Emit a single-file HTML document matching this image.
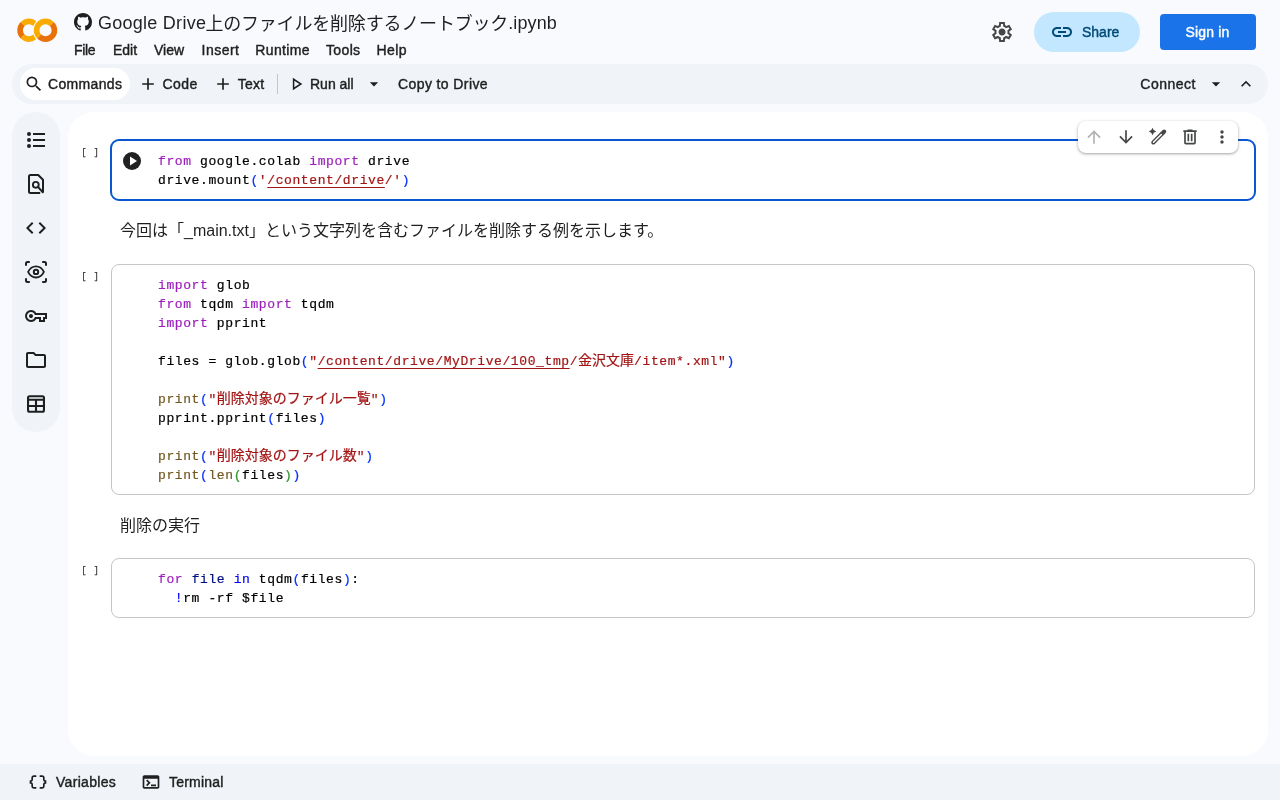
<!DOCTYPE html>
<html lang="ja">
<head>
<meta charset="utf-8">
<title>Google Drive上のファイルを削除するノートブック.ipynb - Colab</title>
<style>
*{box-sizing:border-box;margin:0;padding:0}
html,body{width:1280px;height:800px;overflow:hidden}
body{background:#f8fafd;font-family:"Liberation Sans","Noto Sans CJK JP",sans-serif;color:#1f1f1f;position:relative}
#app{position:absolute;left:0;top:0;width:1280px;height:800px;background:#f8fafd;will-change:transform}
.abs{position:absolute}
svg{display:block;position:absolute;overflow:visible}
.m{-webkit-text-stroke:.42px currentColor}
/* header */
#title{left:98px;top:9.5px;font-size:18px;line-height:26px;white-space:nowrap;color:#1f1f1f}
#menu{left:0;top:40px;font-size:14px;line-height:20px;white-space:nowrap}
#menu span{position:absolute;top:0}
#share{left:1034px;top:12px;width:106px;height:40px;border-radius:20px;background:#c2e7ff;color:#004a77;font-size:14px}
#share span{position:absolute;left:48px;top:10px;line-height:20px}
#signin{left:1160px;top:14px;width:96px;height:36px;border-radius:4px;background:#1a73e8;color:#fff;font-size:14px;line-height:36px}
#signin span{position:absolute;left:25.5px;top:0;letter-spacing:.15px}
/* toolbar */
#tb{left:12px;top:64px;width:1256px;height:40px;border-radius:20px;background:#f0f4f9}
#cmd{left:8px;top:4px;width:110px;height:32px;border-radius:16px;background:#fff}
.tbt{position:absolute;top:10px;font-size:14px;line-height:20px;white-space:nowrap;color:#1f1f1f}
#div1{left:265px;top:10px;width:1px;height:20px;background:#c4c7c5}
/* sidebar */
#side{left:12px;top:112px;width:48px;height:320px;border-radius:24px;background:#f0f4f9}
#side svg{left:12px}
/* notebook */
#nb{left:68px;top:112px;width:1200px;height:644px;border-radius:26px;background:#fff}
.cell{position:absolute;left:43px;width:1144px;border:1px solid #c4c7c5;border-radius:8px;background:#fff}
.cell.focus{left:42px;width:1146px;border:2px solid #0b57d0;border-radius:9px}
.code{position:absolute;left:46px;top:11px;font-family:"Liberation Mono","Noto Sans CJK JP",monospace;font-size:13px;letter-spacing:.6px;line-height:19px;white-space:pre;color:#000;-webkit-text-stroke:.2px}
.j{font-size:14px;letter-spacing:0}
.br{position:absolute;left:13.500px;font-family:"Liberation Mono",monospace;font-size:8.2px;line-height:12px;word-spacing:2.300px;color:#333;-webkit-text-stroke:.25px #333;white-space:pre}
.txt{position:absolute;left:52px;font-size:16px;line-height:24px;color:#1f1f1f;white-space:nowrap}
.k{color:#9d1fbd}.s{color:#a31515}.f{color:#735822}.b1{color:#0431fa}.b2{color:#319331}.v{color:#001080}.kb{color:#0000ff}
.u{text-decoration:underline;text-decoration-thickness:1px;text-underline-offset:3px}
#ctb{left:1010px;top:8.5px;width:160px;height:32px;border-radius:8px;background:#fff;box-shadow:0 1px 2px rgba(60,64,67,.3),0 1px 3px 1px rgba(60,64,67,.15)}
#ctb svg{top:6px}
/* footer */
#ft{left:0;top:764px;width:1280px;height:36px;background:#f0f4f9}
#ft span{position:absolute;top:8px;font-size:14px;line-height:20px}
</style>
</head>
<body>
<div id="app">
<!-- HEADER -->
<svg class="abs" style="left:16.6px;top:9.65px" width="40.5" height="40.5" viewBox="0 0 24 24">
<path d="M4.54,9.46,2.19,7.1a6.93,6.93,0,0,0,0,9.79l2.36-2.36A3.59,3.59,0,0,1,4.54,9.46Z" fill="#e8710a"/>
<path d="M2.19,7.1,4.54,9.46a3.59,3.59,0,0,1,5.08,0l1.71-2.93h0l-.1-.08h0A6.93,6.93,0,0,0,2.19,7.1Z" fill="#f9ab00"/>
<path d="M11.34,17.46h0L9.62,14.54a3.59,3.59,0,0,1-5.08,0L2.19,16.9a6.93,6.93,0,0,0,9,.65l.11-.09" fill="#f9ab00"/>
<path d="M12,7.1a6.93,6.93,0,0,0,0,9.79l2.36-2.36a3.59,3.59,0,1,1,5.08-5.08L21.81,7.1A6.93,6.93,0,0,0,12,7.1Z" fill="#f9ab00"/>
<path d="M21.81,7.1,19.46,9.46a3.59,3.59,0,0,1-5.08,5.08L12,16.9A6.93,6.93,0,0,0,21.81,7.1Z" fill="#e8710a"/>
</svg>
<svg class="abs" style="left:74px;top:13px" width="18" height="18" viewBox="0 0 16 16"><path fill="#1f1f1f" d="M8 0C3.58 0 0 3.58 0 8c0 3.54 2.29 6.53 5.47 7.59.4.07.55-.17.55-.38 0-.19-.01-.82-.01-1.49-2.01.37-2.53-.49-2.69-.94-.09-.23-.48-.94-.82-1.13-.28-.15-.68-.52-.01-.53.63-.01 1.08.58 1.23.82.72 1.21 1.87.87 2.33.66.07-.52.28-.87.51-1.07-1.78-.2-3.64-.89-3.64-3.95 0-.87.31-1.59.82-2.15-.08-.2-.36-1.020.08-2.120 0 0 .67-.21 2.200.82.64-.18 1.320-.27 2-.27s1.360.09 2 .27c1.530-1.040 2.200-.82 2.200-.82.44 1.100.16 1.920.08 2.120.51.56.82 1.270.82 2.150 0 3.070-1.870 3.750-3.650 3.950.29.25.54.73.54 1.480 0 1.070-.01 1.930-.01 2.200 0 .21.15.46.55.38A8.013 8.013 0 0 0 16 8c0-4.420-3.580-8-8-8z"/></svg>
<div id="title" class="abs"><span style="letter-spacing:.26px">Google Drive</span><span style="letter-spacing:-.19px;position:relative;top:1px;margin-left:-.8px">上のファイルを削除するノートブック</span><span style="letter-spacing:.12px">.ipynb</span></div>
<div id="menu" class="abs m"><span style="left:74px;letter-spacing:-.3px">File</span><span style="left:113px">Edit</span><span style="left:154px">View</span><span style="left:201.500px;letter-spacing:.5px">Insert</span><span style="left:255.300px;letter-spacing:.36px">Runtime</span><span style="left:326px;letter-spacing:.36px">Tools</span><span style="left:376.500px;letter-spacing:.4px">Help</span></div>
<svg class="abs" style="left:990px;top:20px" width="24" height="24" viewBox="0 -960 960 960"><path fill="#444746" d="m370-80-16-128q-13-5-24.500-12T307-235l-119 50L78-375l103-78q-1-7-1-13.500v-27q0-6.500 1-13.500L78-585l110-190 119 50q11-8 23-15t24-12l16-128h220l16 128q13 5 24.500 12t22.500 15l119-50 110 190-103 78q1 7 1 13.500v27q0 6.500-2 13.500l103 78-110 190-118-50q-11 8-23 15t-24 12L590-80H370Zm70-80h79l14-106q31-8 57.500-23.500T639-327l99 41 39-68-86-65q5-14 7-29.500t2-31.500q0-16-2-31.500t-7-29.500l86-65-39-68-99 42q-22-23-48.500-38.500T533-694l-13-106h-79l-14 106q-31 8-57.500 23.500T321-633l-99-41-39 68 86 64q-5 15-7 30t-2 32q0 16 2 31t7 30l-86 65 39 68 99-42q22 23 48.500 38.500T427-266l13 106Zm42-180q58 0 99-41t41-99q0-58-41-99t-99-41q-59 0-99.500 41T342-480q0 58 40.500 99t99.500 41Z"/></svg>
<div id="share" class="abs m"><svg style="left:16px;top:8px" width="24" height="24" viewBox="0 0 24 24"><path fill="#004a77" d="M3.9 12c0-1.710 1.390-3.100 3.100-3.100h4V7H7c-2.760 0-5 2.240-5 5s2.240 5 5 5h4v-1.900H7c-1.710 0-3.100-1.390-3.100-3.100zM8 13h8v-2H8v2zm9-6h-4v1.900h4c1.710 0 3.100 1.390 3.100 3.100s-1.390 3.100-3.100 3.100h-4V17h4c2.760 0 5-2.240 5-5s-2.240-5-5-5z"/></svg><span>Share</span></div>
<div id="signin" class="abs m"><span>Sign in</span></div>
<!-- TOOLBAR -->
<div id="tb" class="abs m">
  <div id="cmd" class="abs"></div>
  <svg style="left:12px;top:10px" width="20" height="20" viewBox="0 0 24 24"><path fill="#1f1f1f" d="M15.500 14h-.790l-.280-.270A6.471 6.471 0 0 0 16 9.500 6.500 6.500 0 1 0 9.500 16c1.610 0 3.090-.590 4.230-1.570l.270.280v.790l5 4.990L20.490 19l-4.990-5zm-6 0C7.010 14 5 11.990 5 9.500S7.010 5 9.500 5 14 7.010 14 9.500 11.990 14 9.500 14z"/></svg>
  <span class="tbt" style="left:36px;letter-spacing:.33px">Commands</span>
  <svg style="left:126px;top:10px" width="20" height="20" viewBox="0 0 24 24"><path fill="#1f1f1f" d="M19 13h-6v6h-2v-6H5v-2h6V5h2v6h6v2z"/></svg>
  <span class="tbt" style="left:150.500px;letter-spacing:.4px">Code</span>
  <svg style="left:201px;top:10px" width="20" height="20" viewBox="0 0 24 24"><path fill="#1f1f1f" d="M19 13h-6v6h-2v-6H5v-2h6V5h2v6h6v2z"/></svg>
  <span class="tbt" style="left:225.700px;letter-spacing:.3px">Text</span>
  <div id="div1" class="abs"></div>
  <svg style="left:275px;top:10px" width="20" height="20" viewBox="0 0 24 24"><path fill="none" stroke="#1f1f1f" stroke-width="1.8" stroke-linejoin="miter" d="M7.900 6.300v11.400L16.700 12z"/></svg>
  <span class="tbt" style="left:298px;letter-spacing:0">Run all</span>
  <svg style="left:352px;top:10px" width="20" height="20" viewBox="0 0 24 24"><path fill="#1f1f1f" d="M7 10l5 5 5-5z"/></svg>
  <span class="tbt" style="left:386px;letter-spacing:.4px">Copy to Drive</span>
  <span class="tbt" style="left:1128.300px;letter-spacing:.5px">Connect</span>
  <svg style="left:1194px;top:10px" width="20" height="20" viewBox="0 0 24 24"><path fill="#1f1f1f" d="M7 10l5 5 5-5z"/></svg>
  <svg style="left:1224px;top:10px" width="20" height="20" viewBox="0 0 24 24"><path fill="#1f1f1f" d="M7.410 15.410L12 10.830l4.590 4.580L18 14l-6-6-6 6z"/></svg>
</div>
<!-- SIDEBAR -->
<div id="side" class="abs">
  <svg style="top:16px" width="24" height="24" viewBox="0 0 24 24"><g fill="#1f1f1f"><circle cx="5" cy="6" r="2"/><circle cx="5" cy="12" r="2"/><circle cx="5" cy="18" r="2"/><path d="M9 5h12v2H9zM9 11h12v2H9zM9 17h12v2H9z"/></g></svg>
  <svg style="top:60px" width="24" height="24" viewBox="0 0 24 24"><g fill="none" stroke="#1f1f1f" stroke-width="2"><path d="M16.200 21H6.500A1.500 1.500 0 0 1 5 19.500v-15A1.500 1.500 0 0 1 6.500 3h7.700L19 7.800V20.500" stroke-linejoin="round"/><circle cx="11.800" cy="12.800" r="2.900" stroke-width="1.900"/><path d="M13.900 14.900l5.400 5.900"/></g></svg>
  <svg style="top:104px" width="24" height="24" viewBox="0 0 24 24"><path fill="#1f1f1f" d="M9.400 16.600L4.800 12l4.600-4.600L8 6l-6 6 6 6 1.400-1.400zm5.200 0l4.600-4.600-4.600-4.600L16 6l6 6-6 6-1.400-1.400z"/></svg>
  <svg style="top:148px" width="24" height="24" viewBox="0 0 24 24"><g fill="none" stroke="#1f1f1f" stroke-width="2"><path d="M2 5.800V3.500A1.500 1.500 0 0 1 3.500 2H5.800M18.200 2h2.300A1.500 1.500 0 0 1 22 3.500v2.300M22 18.200v2.300a1.500 1.500 0 0 1-1.500 1.500h-2.300M5.800 22H3.500A1.500 1.500 0 0 1 2 20.500v-2.300"/><path stroke-width="1.800" d="M4.100 11.900C5.800 8.300 8.700 6.300 12 6.300s6.200 2 7.900 5.600c-1.700 3.600-4.600 5.600-7.900 5.600s-6.200-2-7.900-5.600z"/><circle cx="12" cy="11.900" r="2.200"/></g></svg>
  <svg style="top:192px" width="24" height="24" viewBox="0 -960 960 960"><path fill="#1f1f1f" d="M280-240q-100 0-170-70T40-480q0-100 70-170t170-70q66 0 121 33t87 87h432v240h-80v120H600v-120H488q-32 54-87 87t-121 33Zm0-80q66 0 106-40.500t48-79.500h246v120h80v-120h80v-80H434q-8-39-48-79.500T280-640q-66 0-113 47t-47 113q0 66 47 113t113 47Zm0-80q33 0 56.500-23.500T360-480q0-33-23.500-56.500T280-560q-33 0-56.500 23.500T200-480q0 33 23.500 56.500T280-400Z"/></svg>
  <svg style="top:236px" width="24" height="24" viewBox="0 0 24 24"><path fill="#1f1f1f" d="M9.170 6l2 2H20v10H4V6h5.170M10 4H4c-1.100 0-1.990.9-1.990 2L2 18c0 1.100.9 2 2 2h16c1.100 0 2-.9 2-2V8c0-1.100-.9-2-2-2h-8l-2-2z"/></svg>
  <svg style="top:280px" width="24" height="24" viewBox="0 0 24 24"><g fill="none" stroke="#1f1f1f" stroke-width="2.100"><rect x="4.050" y="4.300" width="15.900" height="15.400" rx="1.500"/><path d="M4 7.800h16M4 14h16M12 8v12"/></g></svg>
</div>
<!-- NOTEBOOK -->
<div id="nb" class="abs">
  <div class="br" style="top:34.5px">[ ]</div>
  <div class="cell focus" style="top:27px;height:62px"><svg style="left:11px;top:11px" width="18" height="18" viewBox="0 0 18 18"><circle cx="9" cy="9" r="9" fill="#212121"/><path d="M7 4.500v9l7-4.500z" fill="#fff"/></svg><div class="code" style="top:11px"><span class="k">from</span> google.colab <span class="k">import</span> drive
drive.mount<span class="b1">(</span><span class="s">'<span class="u">/content/drive</span>/'</span><span class="b1">)</span></div></div>
  <div class="txt" style="top:107px">今回は「_main.txt」という文字列を含むファイルを削除する例を示します。</div>
  <div class="br" style="top:158.5px">[ ]</div>
  <div class="cell" style="top:152px;height:231px"><div class="code"><span class="k">import</span> glob
<span class="k">from</span> tqdm <span class="k">import</span> tqdm
<span class="k">import</span> pprint

files = glob.glob<span class="b1">(</span><span class="s">"<span class="u">/content/drive/MyDrive/100_tmp</span>/<span class="j">金沢文庫</span>/item*.xml"</span><span class="b1">)</span>

<span class="f">print</span><span class="b1">(</span><span class="s">"<span class="j">削除対象のファイル一覧</span>"</span><span class="b1">)</span>
pprint.pprint<span class="b1">(</span>files<span class="b1">)</span>

<span class="f">print</span><span class="b1">(</span><span class="s">"<span class="j">削除対象のファイル数</span>"</span><span class="b1">)</span>
<span class="f">print</span><span class="b1">(</span><span class="f">len</span><span class="b2">(</span>files<span class="b2">)</span><span class="b1">)</span></div></div>
  <div class="txt" style="top:402px">削除の実行</div>
  <div class="br" style="top:452.5px">[ ]</div>
  <div class="cell" style="top:446px;height:60px"><div class="code"><span class="k">for</span> <span class="v">file</span> <span class="kb">in</span> tqdm<span class="b1">(</span>files<span class="b1">)</span>:
  <span class="kb">!</span>rm -rf $file</div></div>
  <div id="ctb" class="abs">
    <svg style="left:6px" width="20" height="20" viewBox="0 0 24 24"><path fill="#b0b2b1" d="M4 12l1.410 1.410L11 7.830V20h2V7.830l5.580 5.590L20 12l-8-8-8 8z"/></svg>
    <svg style="left:38px" width="20" height="20" viewBox="0 0 24 24"><path fill="#444746" d="M20 12l-1.410-1.410L13 16.170V4h-2v12.170l-5.580-5.590L4 12l8 8 8-8z"/></svg>
    <svg style="left:70px" width="20" height="20" viewBox="0 0 20 20"><path d="M5.300 15.450L16.200 4.550" stroke="#444746" stroke-width="4.100" stroke-linecap="round" fill="none"/><path d="M5.500 15.250L13.300 7.450" stroke="#fff" stroke-width="1.500" stroke-linecap="round" fill="none"/><path fill="#444746" d="M4.500 .8Q5.200 3.800 8.200 4.500Q5.200 5.200 4.500 8.200Q3.800 5.200 .8 4.500Q3.800 3.800 4.500 .8z"/></svg>
    <svg style="left:102px" width="20" height="20" viewBox="0 -960 960 960"><path fill="#444746" d="M280-120q-33 0-56.500-23.500T200-200v-520h-40v-80h200v-40h240v40h200v80h-40v520q0 33-23.500 56.500T680-120H280Zm400-600H280v520h400v-520ZM360-280h80v-360h-80v360Zm160 0h80v-360h-80v360ZM280-720v520-520Z"/></svg>
    <svg style="left:134px" width="20" height="20" viewBox="0 0 24 24"><path fill="#444746" d="M12 8c1.100 0 2-.9 2-2s-.9-2-2-2-2 .9-2 2 .9 2 2 2zm0 2c-1.100 0-2 .9-2 2s.9 2 2 2 2-.9 2-2-.9-2-2-2zm0 6c-1.100 0-2 .9-2 2s.9 2 2 2 2-.9 2-2-.9-2-2-2z"/></svg>
  </div>
</div>
<!-- FOOTER -->
<div id="ft" class="abs m">
  <svg style="left:28px;top:8px" width="20" height="20" viewBox="0 -960 960 960"><path fill="#1f1f1f" d="M560-160v-80h120q17 0 28.500-11.500T720-280v-80q0-38 22-69t58-44v-14q-36-13-58-44t-22-69v-80q0-17-11.500-28.500T680-720H560v-80h120q50 0 85 35t35 85v80q0 17 11.500 28.500T840-560h40v160h-40q-17 0-28.500 11.500T800-360v80q0 50-35 85t-85 35H560Zm-280 0q-50 0-85-35t-35-85v-80q0-17-11.500-28.500T120-400H80v-160h40q17 0 28.500-11.500T160-600v-80q0-50 35-85t85-35h120v80H280q-17 0-28.500 11.500T240-680v80q0 38-22 69t-58 44v14q36 13 58 44t22 69v80q0 17 11.500 28.500T280-240h120v80H280Z"/></svg>
  <span style="left:56px;letter-spacing:.3px">Variables</span>
  <svg style="left:140.500px;top:8px" width="20" height="20" viewBox="0 -960 960 960"><path fill="#1f1f1f" d="M160-160q-33 0-56.500-23.500T80-240v-480q0-33 23.500-56.500T160-800h640q33 0 56.500 23.500T880-720v480q0 33-23.500 56.500T800-160H160Zm0-80h640v-400H160v400Zm140-40-56-56 103-104-104-104 57-56 160 160-160 160Zm180 0v-80h240v80H480Z"/></svg>
  <span style="left:169px;letter-spacing:.2px">Terminal</span>
</div>
</div>
</body>
</html>
